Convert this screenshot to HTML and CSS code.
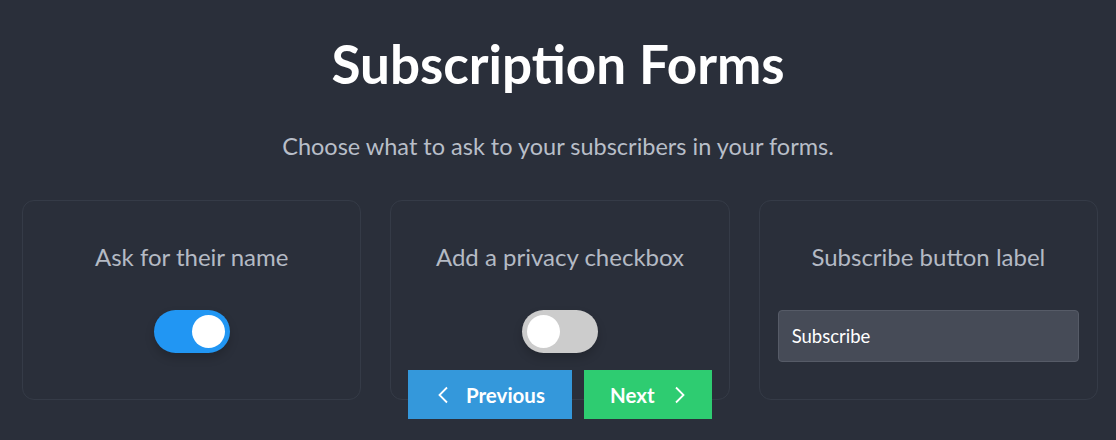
FILE: index.html
```html
<!DOCTYPE html>
<html lang="en">
<head>
    <meta charset="UTF-8">
    <meta name="viewport" content="width=device-width, initial-scale=1.0">
    <title>Subscription Forms</title>
    <link rel="stylesheet" href="styles.css">
</head>
<body>
    <div class="page">
        <h1 class="title">Subscription Forms</h1>
        <p class="subtitle">Choose what to ask to your subscribers in your forms.</p>

        <div class="cards">
            <div class="card">
                <div class="card-label">Ask for their name</div>
                <div class="card-control">
                    <span class="toggle on"><span class="knob"></span></span>
                </div>
            </div>

            <div class="card">
                <div class="card-label">Add a privacy checkbox</div>
                <div class="card-control">
                    <span class="toggle"><span class="knob"></span></span>
                </div>
            </div>

            <div class="card">
                <div class="card-label">Subscribe button label</div>
                <div class="card-control">
                    <input class="text-input" type="text" value="Subscribe">
                </div>
            </div>
        </div>

        <!-- step navigation sits over the bottom of the cards -->
        <div class="nav">
            <button class="btn btn-prev">
                <svg width="12" height="18" viewBox="0 0 12 18"><path d="M10 1.5 L2.5 9 L10 16.5" fill="none" stroke="#fff" stroke-width="1.8"/></svg>
                <span>Previous</span>
            </button>
            <button class="btn btn-next">
                <span>Next</span>
                <svg width="12" height="18" viewBox="0 0 12 18"><path d="M2 1.5 L9.5 9 L2 16.5" fill="none" stroke="#fff" stroke-width="1.8"/></svg>
            </button>
        </div>
    </div>
</body>
</html>
```

FILE: styles.css
```css
body {
    margin: 0;
    background-color: #2a2f3a;
    font-family: Lato, 'Noto Sans', sans-serif;
    color: #b4bac4;
}

.page {
    position: relative;
    height: 440px;
    overflow: hidden;
}

.title {
    margin: 0;
    padding-top: 32px;
    text-align: center;
    font-size: 53px;
    line-height: 64px;
    font-weight: 700;
    color: #ffffff;
}

.subtitle {
    margin: 36px 0 0 0;
    text-align: center;
    font-size: 23.5px;
    line-height: 28px;
    color: #b8bec8;
}

.cards {
    display: grid;
    grid-template-columns: repeat(3, 1fr);
    gap: 29px;
    padding: 0 18px 0 22px;
    margin-top: 40px;
}

.card {
    height: 200px;
    box-sizing: border-box;
    border: 1px solid #353b47;
    border-radius: 12px;
    padding: 43px 18px 0 18px;
    text-align: center;
}

.card-label {
    font-size: 24px;
    line-height: 26px;
    color: #b4bac4;
}

.card-control {
    margin-top: 40px;
    display: flex;
    justify-content: center;
}

.toggle {
    display: block;
    width: 76px;
    height: 43px;
    border-radius: 22px;
    background-color: #cccccc;
    box-shadow: 0 5px 10px rgba(0, 0, 0, 0.18);
    position: relative;
}

.toggle.on {
    background-color: #2196f3;
}

.knob {
    position: absolute;
    top: 5px;
    left: 5px;
    width: 33px;
    height: 33px;
    border-radius: 50%;
    background-color: #ffffff;
}

.toggle.on .knob {
    left: 38px;
}

.text-input {
    width: 100%;
    height: 52px;
    box-sizing: border-box;
    background-color: #464b57;
    border: 1px solid #565b67;
    border-radius: 4px;
    padding: 0 13px;
    font-family: Lato, 'Noto Sans', sans-serif;
    font-size: 18.5px;
    color: #ffffff;
    outline: none;
}

.nav {
    position: absolute;
    top: 370px;
    left: 0;
    right: 0;
    padding-left: 4px;
    display: flex;
    justify-content: center;
    gap: 12px;
}

.btn {
    height: 49px;
    border: none;
    display: flex;
    align-items: center;
    font-family: Lato, 'Noto Sans', sans-serif;
    font-size: 20.5px;
    font-weight: 700;
    color: #ffffff;
    cursor: pointer;
}

.btn-prev {
    width: 164px;
    background-color: #3498db;
    padding: 0 0 0 29px;
    gap: 17px;
}

.btn-next {
    width: 128px;
    background-color: #2ecc71;
    padding: 0 0 0 26px;
    gap: 19px;
}
```
